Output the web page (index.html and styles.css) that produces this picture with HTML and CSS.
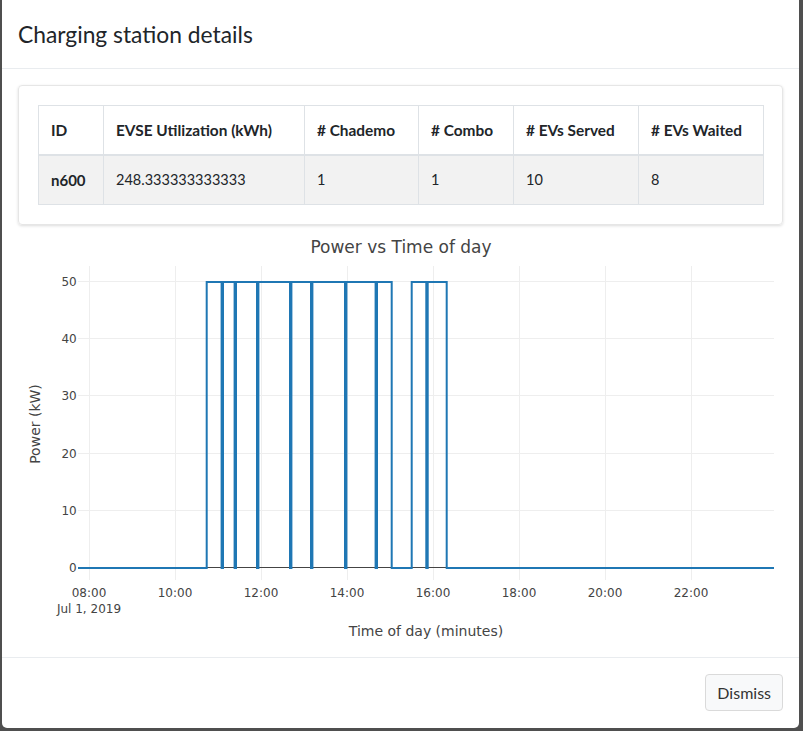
FILE: index.html
```html
<!DOCTYPE html>
<html lang="en">
<head>
<meta charset="utf-8">
<title>Charging station details</title>
<link rel="stylesheet" href="styles.css">
</head>
<body>
<div class="modal">
  <div class="modal-header">
    <h5 class="modal-title">Charging station details</h5>
  </div>
  <div class="modal-body">
    <div class="card">
      <table class="stats">
        <thead>
          <tr>
            <th class="c-id">ID</th>
            <th class="c-evse">EVSE Utilization (kWh)</th>
            <th class="c-chademo"># Chademo</th>
            <th class="c-combo"># Combo</th>
            <th class="c-served"># EVs Served</th>
            <th class="c-waited"># EVs Waited</th>
          </tr>
        </thead>
        <tbody>
          <tr>
            <th>n600</th>
            <td>248.333333333333</td>
            <td>1</td>
            <td>1</td>
            <td>10</td>
            <td>8</td>
          </tr>
        </tbody>
      </table>
    </div>
    <svg class="chart" width="766" height="416" viewBox="0 0 766 416">
      <text class="chart-title" x="383" y="28" text-anchor="middle">Power vs Time of day</text>
      <g class="grid">
        <line x1="71.5" y1="41" x2="71.5" y2="355"/>
        <line x1="157.5" y1="41" x2="157.5" y2="355"/>
        <line x1="243.5" y1="41" x2="243.5" y2="355"/>
        <line x1="329.5" y1="41" x2="329.5" y2="355"/>
        <line x1="415.5" y1="41" x2="415.5" y2="355"/>
        <line x1="501.5" y1="41" x2="501.5" y2="355"/>
        <line x1="587.5" y1="41" x2="587.5" y2="355"/>
        <line x1="673.5" y1="41" x2="673.5" y2="355"/>
        <line x1="60" y1="56.5" x2="756" y2="56.5"/>
        <line x1="60" y1="113.5" x2="756" y2="113.5"/>
        <line x1="60" y1="170.5" x2="756" y2="170.5"/>
        <line x1="60" y1="228.5" x2="756" y2="228.5"/>
        <line x1="60" y1="285.5" x2="756" y2="285.5"/>
      </g>
      <line class="zeroline" x1="60" y1="342.5" x2="756" y2="342.5"/>
      <path class="trace" d="M60,343 H188.7 V57 H203.6 V343 H205 V57 H216.6 V343 H218 V57 H239 V343 H240.4 V57 H272 V343 H273.4 V57 H293 V343 H294.4 V57 H327 V343 H328.4 V57 H357.6 V343 H359 V57 H373.7 V343 H393.7 V57 H408.3 V343 H409.7 V57 H428.7 V343 H756"/>
      <g class="ticks ytick">
        <text x="58.7" y="60.8">50</text>
        <text x="58.7" y="117.8">40</text>
        <text x="58.7" y="174.8">30</text>
        <text x="58.7" y="232.8">20</text>
        <text x="58.7" y="289.8">10</text>
        <text x="58.7" y="346.8">0</text>
      </g>
      <g class="ticks xtick">
        <text x="71" y="372">08:00</text>
        <text x="71" y="388">Jul 1, 2019</text>
        <text x="157" y="372">10:00</text>
        <text x="243" y="372">12:00</text>
        <text x="329" y="372">14:00</text>
        <text x="415" y="372">16:00</text>
        <text x="501" y="372">18:00</text>
        <text x="587" y="372">20:00</text>
        <text x="673" y="372">22:00</text>
      </g>
      <text class="axis-title" x="408" y="411" text-anchor="middle">Time of day (minutes)</text>
      <text class="axis-title" x="0" y="0" text-anchor="middle" transform="translate(21.5 199) rotate(-90)">Power (kW)</text>
    </svg>
  </div>
  <div class="modal-footer">
    <button class="btn" type="button">Dismiss</button>
  </div>
</div>
</body>
</html>
```

FILE: styles.css
```css
html, body {
  margin: 0;
  padding: 0;
}
body {
  background: #4f4f4f;
  font-family: "Lato", "Open Sans", sans-serif;
  color: #212529;
  width: 803px;
  height: 731px;
  overflow: hidden;
}
.modal {
  margin-left: 2px;
  width: 797px;
  height: 728px;
  background: #fff;
  border-radius: 0 0 5px 5px;
  box-sizing: border-box;
  display: flex;
  flex-direction: column;
}
.modal-header {
  padding: 16px 16px;
  border-bottom: 1px solid #e9ecef;
}
.modal-title {
  margin: 0;
  font-size: 22.8px;
  line-height: 36px;
  font-weight: 400;
  color: #212529;
}
.modal-body {
  padding: 16px 16px;
}
.card {
  border: 1px solid #e6e6e6;
  border-radius: 4px;
  box-shadow: 0 1px 3px rgba(0, 0, 0, 0.14);
  padding: 19px 19px;
}
.stats {
  border-collapse: collapse;
  table-layout: fixed;
  width: 725px;
  font-size: 15px;
  line-height: 24px;
}
.stats th,
.stats td {
  box-sizing: border-box;
  border: 1px solid #dee2e6;
  padding: 12px 12px;
  text-align: left;
  vertical-align: middle;
  white-space: nowrap;
  overflow: hidden;
}
.stats th {
  font-weight: 700;
}
.stats thead th {
  font-size: 15.4px;
  border-bottom: 2px solid #dee2e6;
  background: #fff;
}
.stats td {
  font-weight: 400;
  font-size: 14.5px;
}
.stats tbody tr {
  background: #f2f2f2;
}
.c-id { width: 65px; }
.c-evse { width: 201px; }
.c-chademo { width: 114px; }
.c-combo { width: 95px; }
.c-served { width: 125px; }
.c-waited { width: 125px; }
.chart {
  display: block;
  font-family: "DejaVu Sans", Verdana, sans-serif;
}
.chart text {
  fill: #444;
}
.chart-title {
  font-size: 17px;
}
.grid line {
  stroke: #eee;
  stroke-width: 1;
}
.zeroline {
  stroke: #444;
  stroke-width: 1;
}
.trace {
  fill: none;
  stroke: #1f77b4;
  stroke-width: 2;
}
.ticks text {
  font-size: 12px;
}
.ytick text {
  text-anchor: end;
}
.xtick text {
  text-anchor: middle;
}
.axis-title {
  font-size: 14px;
}
.modal-footer {
  border-top: 1px solid #e9ecef;
  padding: 16px 16px;
  display: flex;
  justify-content: flex-end;
}
.btn {
  font-family: "Lato", "Open Sans", sans-serif;
  font-size: 16px;
  line-height: 24px;
  height: 37px;
  padding: 6px 11px;
  color: #333;
  background: #f8f9fa;
  border: 1px solid #dadada;
  border-radius: 4px;
}
```
